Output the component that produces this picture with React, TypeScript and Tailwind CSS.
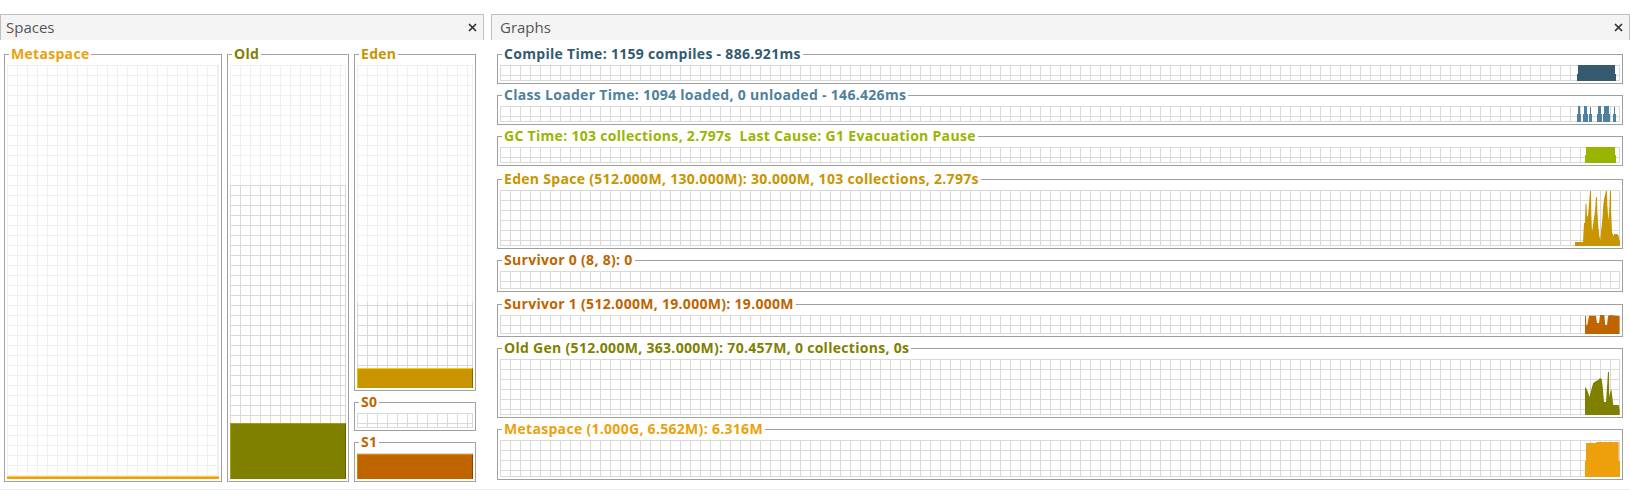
import React from 'react';

const FONT = "font-['Open_Sans',sans-serif]";
const LIGHT_GRID =
    'bg-[linear-gradient(to_right,#efefef_1px,transparent_1px),linear-gradient(to_bottom,#efefef_1px,transparent_1px)] bg-[size:10px_10px]';
const DARK_GRID =
    'bg-[linear-gradient(to_right,#d9d9d9_1px,transparent_1px),linear-gradient(to_bottom,#d9d9d9_1px,transparent_1px)] bg-[size:10px_10px]';

function CloseIcon() {
    return (
        <svg width="9" height="9" viewBox="0 0 9 9" className="shrink-0">
            <path d="M1 1 L8 8 M8 1 L1 8" stroke="#333" strokeWidth="1.7" />
        </svg>
    );
}

function PanelHeader({ title, pad }: { title: string; pad: string }) {
    return (
        <div className={`h-[26px] flex items-center justify-between bg-[#f4f4f4] border-t border-l border-r border-[#c0c0c0] ${pad} pr-[6px]`}>
            <span className={`text-[15px] leading-none text-[#555] ${FONT}`}>{title}</span>
            <CloseIcon />
        </div>
    );
}

function Title({ text, color }: { text: string; color: string }) {
    return (
        <span
            className={`absolute left-[4px] top-[-10px] bg-white px-[2px] text-[14px] font-bold leading-[18px] tracking-[0.3px] whitespace-pre ${color} ${FONT}`}
        >
            {text}
        </span>
    );
}

/* ---------- Spaces ---------- */

function SpaceBox({ title, color, size, children }: { title: string; color: string; size: string; children: React.ReactNode }) {
    return (
        <div className={`relative flex flex-col border border-[#a0a0a0] pt-[10px] px-[2px] pb-[2px] ${size}`}>
            <Title text={title} color={color} />
            {children}
        </div>
    );
}

function Spaces() {
    return (
        <div className="w-[484px] flex flex-col">
            <PanelHeader title="Spaces" pad="pl-[5px]" />
            <div className="flex gap-[5px] pl-[4px] pt-[14px]">
                {/* Metaspace */}
                <SpaceBox title="Metaspace" color="text-[#eda00c]" size="w-[218px] h-[428px]">
                    <div className={`flex-1 flex flex-col justify-end border-r border-b border-[#efefef] ${LIGHT_GRID}`}>
                        <div className="h-[3px] -mr-px -mb-px bg-[#eda00c] border-t border-[#ffc83c]" />
                    </div>
                </SpaceBox>

                {/* Old */}
                <SpaceBox title="Old" color="text-[#808000]" size="w-[122px] h-[428px]">
                    <div className="flex-1 flex flex-col">
                        <div className={`h-[120px] border-r border-[#efefef] ${LIGHT_GRID}`} />
                        <div className={`flex-1 flex flex-col justify-end border-r border-b border-[#d9d9d9] ${DARK_GRID}`}>
                            <div className="h-[56px] -mr-px -mb-px bg-[#808000] border-t border-l border-r border-t-[#a3a300] border-l-[#a3a300] border-r-[#5c5c00]" />
                        </div>
                    </div>
                </SpaceBox>

                {/* Eden / S0 / S1 */}
                <div className="w-[122px] flex flex-col gap-[11px]">
                    <SpaceBox title="Eden" color="text-[#c89400]" size="h-[337px]">
                        <div className="flex-1 flex flex-col">
                            <div className={`h-[237px] border-r border-[#efefef] ${LIGHT_GRID}`} />
                            <div className={`flex-1 flex flex-col justify-end border-r border-b border-[#d9d9d9] bg-[position:0_3px] ${DARK_GRID}`}>
                                <div className="h-[20px] -mr-px -mb-px bg-[#c89400] border-t border-l border-r border-t-[#ffcc00] border-l-[#f0bc00] border-r-[#8a6600]" />
                            </div>
                        </div>
                    </SpaceBox>
                    <SpaceBox title="S0" color="text-[#c06400]" size="h-[29px]">
                        <div className={`flex-1 border-r border-b border-[#d9d9d9] ${DARK_GRID}`} />
                    </SpaceBox>
                    <SpaceBox title="S1" color="text-[#c06400]" size="h-[40px]">
                        <div className={`flex-1 flex flex-col justify-end border-r border-b border-[#d9d9d9] ${DARK_GRID}`}>
                            <div className="h-[25px] -mr-px -mb-px bg-[#c06400] border-t border-l border-r border-t-[#e88400] border-l-[#e07c00] border-r-[#844400]" />
                        </div>
                    </SpaceBox>
                </div>
            </div>
        </div>
    );
}

/* ---------- Graphs ---------- */

type Shape = { poly?: string; rects?: [number, number, number, number][] };

interface GraphRow {
    title: string;
    color: string;
    fill: string;
    size: string;
    gap: string;
    gh: number;
    shape: Shape;
}

const rows: GraphRow[] = [
    {
        title: 'Compile Time: 1159 compiles - 886.921ms',
        color: 'text-[#335a70]',
        fill: '#365a6e',
        size: 'h-[30px]',
        gap: '',
        gh: 16,
        shape: { poly: '3,0 40,0 40,9 41,9 41,16 2,16 2,9 3,9' },
    },
    {
        title: 'Class Loader Time: 1094 loaded, 0 unloaded - 146.426ms',
        color: 'text-[#4e81a0]',
        fill: '#4e81a0',
        size: 'h-[30px]',
        gap: 'mt-[11px]',
        gh: 16,
        shape: {
            rects: [
                [3, 0, 2, 16], [2, 8, 4, 8],
                [9, 0, 3, 16], [8, 8, 5, 8],
                [15, 1, 1, 15], [14, 8, 3, 8],
                [23, 0, 3, 16], [22, 8, 5, 8],
                [29, 0, 5, 16], [28, 8, 7, 8],
                [39, 1, 1, 15], [38, 8, 3, 8],
            ],
        },
    },
    {
        title: 'GC Time: 103 collections, 2.797s  Last Cause: G1 Evacuation Pause',
        color: 'text-[#9ab500]',
        fill: '#9ab500',
        size: 'h-[30px]',
        gap: 'mt-[11px]',
        gh: 16,
        shape: { poly: '11,0 40,0 40,8 41,8 41,16 10,16 10,8 11,8' },
    },
    {
        title: 'Eden Space (512.000M, 130.000M): 30.000M, 103 collections, 2.797s',
        color: 'text-[#c89400]',
        fill: '#c89400',
        size: 'h-[70px]',
        gap: 'mt-[13px]',
        gh: 56,
        shape: {
            poly:
                '0,56 0,52 8,52 9,33 10,33 10.5,14 11.5,14 12,27 13,25 13.7,18 15,1 16,1 16.3,24 17,42 18.3,33 20,21 21,7 22,7 22.3,21 23.3,36 24.3,46 25.3,50 26.3,39 27.3,30 28.3,15 29.3,8 30.3,4 31,1 32,1 32.3,14 33.3,30 34.3,20 35,1 36,1 36.2,23 37,42 38.3,46 39.3,44 42.3,44 43.7,46 44.3,50 45,51 45,56',
        },
    },
    {
        title: 'Survivor 0 (8, 8): 0',
        color: 'text-[#c06400]',
        fill: '#c06400',
        size: 'h-[32px]',
        gap: 'mt-[11px]',
        gh: 18,
        shape: {},
    },
    {
        title: 'Survivor 1 (512.000M, 19.000M): 19.000M',
        color: 'text-[#c06400]',
        fill: '#c06400',
        size: 'h-[33px]',
        gap: 'mt-[12px]',
        gh: 19,
        shape: {
            poly:
                '10,19 10,1 11,1 11.3,10 12.3,10 14,0.7 21,0.7 22,8 24,8 25,0 29.3,0 30.3,10 32,10 33,1 35,0 43.3,1 44.5,1 44.5,19',
        },
    },
    {
        title: 'Old Gen (512.000M, 363.000M): 70.457M, 0 collections, 0s',
        color: 'text-[#808000]',
        fill: '#808000',
        size: 'h-[70px]',
        gap: 'mt-[11px]',
        gh: 56,
        shape: {
            poly:
                '10,56 10,28 11.7,30 13.3,34 14.3,38 15.7,33 17,28 18.3,24 21,22 23.3,21 25,19 26.7,20 27.7,28 29,43 31,43 32,28 33,13 34,13 34.2,38 35,34 36.3,30 37.3,38 38.3,46 43.7,46 44.7,51 44.7,56',
        },
    },
    {
        title: 'Metaspace (1.000G, 6.562M): 6.316M',
        color: 'text-[#eda00c]',
        fill: '#eda00c',
        size: 'h-[51px]',
        gap: 'mt-[11px]',
        gh: 37,
        shape: { poly: '10,37 10,21 11,21 11,3 21,3 21,2 43.7,2 43.7,21 45,21 45,37' },
    },
];

function Chart({ row }: { row: GraphRow }) {
    const { shape, gh, fill } = row;
    return (
        <svg className="absolute right-[-1px] bottom-[-1px]" width="45" height={gh} viewBox={`0 0 45 ${gh}`}>
            {shape.poly && <polygon points={shape.poly} fill={fill} />}
            {shape.rects?.map(([x, y, w, h], i) => (
                <rect key={i} x={x} y={y} width={w} height={h} fill={fill} />
            ))}
        </svg>
    );
}

function Graphs() {
    return (
        <div className="flex-1 flex flex-col">
            <PanelHeader title="Graphs" pad="pl-[8px]" />
            <div className="flex flex-col pl-[6px] pr-[7px] pt-[14px]">
                {rows.map((row) => (
                    <div
                        key={row.title}
                        className={`relative flex flex-col border border-[#a0a0a0] pt-[10px] px-[2px] pb-[2px] ${row.size} ${row.gap}`}
                    >
                        <Title text={row.title} color={row.color} />
                        <div className={`relative flex-1 border-r border-b border-[#d9d9d9] ${DARK_GRID}`}>
                            <Chart row={row} />
                        </div>
                    </div>
                ))}
            </div>
        </div>
    );
}

export default function App() {
    return (
        <div className="w-[1630px] h-[490px] bg-white flex gap-[7px] pt-[14px] border-b border-[#ececec] overflow-hidden">
            <Spaces />
            <Graphs />
        </div>
    );
}
